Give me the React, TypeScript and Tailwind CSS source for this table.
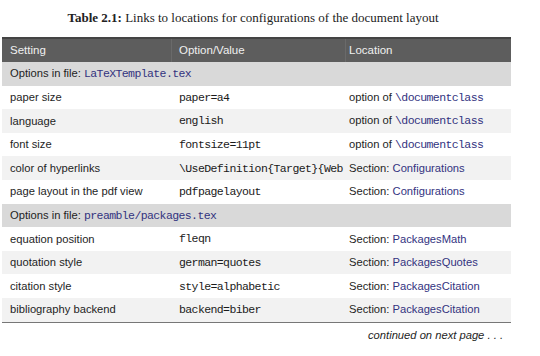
import type { ReactNode } from "react";

type Row =
  | { kind: "file"; file: string }
  | { kind: "entry"; setting: string; value: string; prefix: string; target: string; mono?: boolean };

const ROWS: Row[] = [
  { kind: "file", file: "LaTeXTemplate.tex" },
  { kind: "entry", setting: "paper size", value: "paper=a4", prefix: "option of ", target: "\\documentclass", mono: true },
  { kind: "entry", setting: "language", value: "english", prefix: "option of ", target: "\\documentclass", mono: true },
  { kind: "entry", setting: "font size", value: "fontsize=11pt", prefix: "option of ", target: "\\documentclass", mono: true },
  { kind: "entry", setting: "color of hyperlinks", value: "\\UseDefinition{Target}{Web", prefix: "Section: ", target: "Configurations" },
  { kind: "entry", setting: "page layout in the pdf view", value: "pdfpagelayout", prefix: "Section: ", target: "Configurations" },
  { kind: "file", file: "preamble/packages.tex" },
  { kind: "entry", setting: "equation position", value: "fleqn", prefix: "Section: ", target: "PackagesMath" },
  { kind: "entry", setting: "quotation style", value: "german=quotes", prefix: "Section: ", target: "PackagesQuotes" },
  { kind: "entry", setting: "citation style", value: "style=alphabetic", prefix: "Section: ", target: "PackagesCitation" },
  { kind: "entry", setting: "bibliography backend", value: "backend=biber", prefix: "Section: ", target: "PackagesCitation" },
];

const sans = "font-['Liberation_Sans',Arial,sans-serif]";
const mono = "font-['Liberation_Mono','Courier_New',monospace] text-[11.5px] tracking-[-0.6px]";

function Mono({ children, link }: { children: ReactNode; link?: boolean }) {
  return <span className={`${mono} ${link ? "text-[#33337f]" : "text-[#1a1a1a]"}`}>{children}</span>;
}

export default function App() {
  let stripe = 0;
  return (
    <div className={`w-[540px] h-[356px] bg-white overflow-hidden ${sans} text-[11.2px] text-[#1e1e1e]`}>
      {/* Caption */}
      <p className="pt-[8px] h-[37px] text-center pr-[34px] font-['Liberation_Serif','Times_New_Roman',serif] text-[13px] text-[#222]">
        <span className="font-bold">Table 2.1:</span> Links to locations for configurations of the document layout
      </p>

      <div className="ml-[2px] w-[509px]">
        {/* Header */}
        <div className="flex h-[25px] items-center bg-[#5d5d5d] border-t-2 border-[#444] text-[#f0f0f0] text-[11.5px]">
          <div className="w-[170px] pl-[8px] h-full flex items-center border-r border-[#6a6a6a]">Setting</div>
          <div className="w-[174px] pl-[7px] h-full flex items-center border-r border-[#6a6a6a]">Option/Value</div>
          <div className="flex-1 pl-[3px]">Location</div>
        </div>

        {ROWS.map((r, i) => {
          if (r.kind === "file") {
            stripe = 0;
            return (
              <div key={i} className="flex h-[23.6px] items-center bg-[#d9d9d9] pl-[8px]">
                Options in file:&nbsp;<Mono link>{r.file}</Mono>
              </div>
            );
          }
          stripe++;
          const bg = stripe % 2 === 0 ? "bg-[#f2f2f2]" : "bg-white";
          return (
            <div key={i} className={`flex h-[23.6px] items-center ${bg}`}>
              <div className="w-[170px] pl-[8px]">{r.setting}</div>
              <div className="w-[174px] pl-[7px] whitespace-nowrap overflow-hidden">
                <Mono>{r.value}</Mono>
              </div>
              <div className="flex-1 pl-[3px] whitespace-nowrap">
                {r.prefix}
                {r.mono ? <Mono link>{r.target}</Mono> : <span className="text-[#33337f]">{r.target}</span>}
              </div>
            </div>
          );
        })}
        <div className="border-t border-[#777]" />
        <p className="text-right pr-[8px] pt-[4px] italic">continued on next page . . .</p>
      </div>
    </div>
  );
}
